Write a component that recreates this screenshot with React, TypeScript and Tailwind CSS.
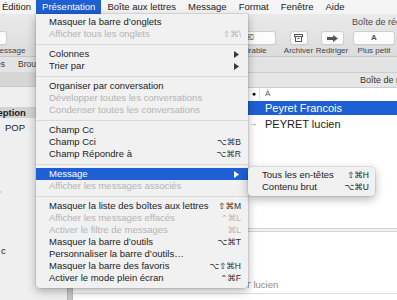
import React from "react";

type Row =
  | { sep: true }
  | {
      sep?: false;
      label: string;
      keys?: string;
      off?: boolean;
      sub?: boolean;
      active?: boolean;
    };

const rows: Row[] = [
  { label: "Masquer la barre d’onglets" },
  { label: "Afficher tous les onglets", keys: "⇧⌘\\", off: true },
  { sep: true },
  { label: "Colonnes", sub: true },
  { label: "Trier par", sub: true },
  { sep: true },
  { label: "Organiser par conversation" },
  { label: "Développer toutes les conversations", off: true },
  { label: "Condenser toutes les conversations", off: true },
  { sep: true },
  { label: "Champ Cc" },
  { label: "Champ Cci", keys: "⌥⌘B" },
  { label: "Champ Répondre à", keys: "⌥⌘R" },
  { sep: true },
  { label: "Message", sub: true, active: true },
  { label: "Afficher les messages associés", off: true },
  { sep: true },
  { label: "Masquer la liste des boîtes aux lettres", keys: "⇧⌘M" },
  { label: "Afficher les messages effacés", keys: "⌃⌘L", off: true },
  { label: "Activer le filtre de messages", keys: "⌘L", off: true },
  { label: "Masquer la barre d’outils", keys: "⌥⌘T" },
  { label: "Personnaliser la barre d’outils…" },
  { label: "Masquer la barre des favoris", keys: "⌥⇧⌘H" },
  { label: "Activer le mode plein écran", keys: "⌃⌘F" },
];

const Arrow = ({ white }: { white?: boolean }) => (
  <svg width="5" height="7" viewBox="0 0 5 7" className="mr-[2px]">
    <polygon points="0,0 5,3.5 0,7" fill={white ? "#ffffff" : "#3a3a3a"} />
  </svg>
);

const ToolButton = ({ w, children }: { w: number; children?: React.ReactNode }) => (
  <div
    className="h-[14px] rounded-[3px] bg-[#fcfcfc] border border-[#cfcfcf] shadow-[0_0.5px_0_rgba(0,0,0,0.08)] flex items-center justify-center shrink-0"
    style={{ width: w }}
  >
    {children}
  </div>
);

const App = () => {
  return (
    <div className="relative w-[397px] h-[300px] overflow-hidden bg-white font-['Liberation_Sans','DejaVu_Sans',sans-serif] text-[#1b1b1b]">
      {/* menu bar */}
      <div className="flex h-[14px] bg-[#f5f5f5] text-[9.5px] leading-[14px] whitespace-nowrap">
        <div className="-ml-[4px] pl-[6px] pr-[5px]">Édition</div>
        <div className="px-[6px] bg-[#1f5fd4] text-white">Présentation</div>
        <div className="px-[6px]">Boîte aux lettres</div>
        <div className="px-[6px]">Message</div>
        <div className="px-[6px]">Format</div>
        <div className="px-[6px]">Fenêtre</div>
        <div className="px-[6px]">Aide</div>
      </div>

      {/* window toolbar */}
      <div className="h-[43px] bg-gradient-to-b from-[#eaeaea] to-[#dcdcdc] border-b border-[#c6c6c6] text-[#444] overflow-hidden">
        <div className="h-[16px] pl-[352px] text-[9px] leading-[16px] text-[#4a4a4a] whitespace-nowrap">
          Boîte de réception
        </div>
        <div className="flex mt-[1px] text-[8px] leading-[10px] whitespace-nowrap">
          <div className="flex flex-col items-center w-[64px] -ml-[40px] shrink-0">
            <ToolButton w={30} />
            <div className="mt-[1px]">Nouveau message</div>
          </div>
          <div className="flex flex-col items-center w-[60px] ml-[7px] shrink-0">
            <ToolButton w={44} />
          </div>
          <div className="w-[127px] shrink-0" />
          <div className="flex flex-col items-center w-[58px] shrink-0">
            <ToolButton w={58}>
              <span className="ml-auto mr-[21px] text-[8px] text-[#666]">⌧</span>
            </ToolButton>
            <div className="mt-[1px]">Indésirable</div>
          </div>
          <div className="flex flex-col items-center w-[31px] ml-[7px] shrink-0">
            <ToolButton w={18}>
              <svg width="9" height="8" viewBox="0 0 9 8">
                <rect x="0.5" y="0.5" width="8" height="2" fill="none" stroke="#555" />
                <rect x="1.5" y="2.5" width="6" height="5" fill="none" stroke="#555" />
                <line x1="3.5" y1="4.5" x2="5.5" y2="4.5" stroke="#555" />
              </svg>
            </ToolButton>
            <div className="mt-[1px]">Archiver</div>
          </div>
          <div className="flex flex-col items-center w-[32px] ml-[2px] shrink-0">
            <ToolButton w={23}>
              <svg width="11" height="7" viewBox="0 0 11 7">
                <polygon points="0,2 6,2 6,0 11,3.5 6,7 6,5 0,5" fill="#555" />
              </svg>
            </ToolButton>
            <div className="mt-[1px]">Rediriger</div>
          </div>
          <div className="flex flex-col items-center w-[42px] ml-[5px] shrink-0">
            <ToolButton w={42}>
              <span className="text-[8px] font-bold text-[#555]">A</span>
            </ToolButton>
            <div className="mt-[1px]">Plus petit</div>
          </div>
          <div className="flex flex-col items-center w-[42px] ml-[2px] shrink-0">
            <ToolButton w={42} />
          </div>
        </div>
      </div>

      {/* favourites bar */}
      <div className="flex h-[15px] bg-[#e3e3e3] text-[8.5px] leading-[15px] text-[#3a3a3a] whitespace-nowrap overflow-hidden">
        <div className="-ml-[19px] shrink-0">Boîtes</div>
        <div className="ml-[13px] shrink-0">Brouillons</div>
      </div>

      {/* body */}
      <div className="flex h-[228px]">
        <div className="w-[67px] shrink-0 flex flex-col bg-[#efefef] text-[9.5px] whitespace-nowrap overflow-hidden">
          <div className="h-[15px] bg-[#d6d6d6] border-b border-[#c9c9c9]" />
          <div className="h-[20px]" />
          <div className="h-[11px] leading-[11px] bg-[#d3d3d3] font-bold">
            <span className="-ml-[57px] inline-block">Boîte de réception</span>
          </div>
          <div className="h-[12px] leading-[12px] mt-[4px] pl-[5px]">POP</div>
          <div className="h-[56px]" />
          <div className="h-[8px] leading-[8px] text-[#888] -ml-[1px]">'</div>
          <div className="h-[47px]" />
          <div className="h-[12px] leading-[12px] pl-[1px]">c</div>
        </div>
        <div className="w-[6px] shrink-0 bg-[#c8c8c8] border-x border-[#b9b9b9]" />
        <div className="flex-1 min-w-0 flex flex-col overflow-hidden">
          <div className="h-[16px] bg-[#e6e6e6] border-y border-[#cdcdcd] pl-[287px] text-[9px] leading-[14px] text-[#333] whitespace-nowrap">
            Boîte de réception
          </div>
          <div className="h-[12px] flex items-center text-[8px] text-[#555]">
            <div className="w-[186px] shrink-0 flex justify-end pr-[3px]">
              <span className="text-[7px] text-black">●</span>
            </div>
            <div className="pl-[5px] border-l border-[#e2e2e2]">À</div>
          </div>
          <div className="h-[14px] mt-[1px] flex items-center bg-[#1f5fd4] text-white text-[11px]">
            <div className="w-[192px] shrink-0" />
            <div>Peyret Francois</div>
          </div>
          <div className="h-[14px] mt-[2px] flex items-center text-[11px]">
            <div className="w-[186px] shrink-0 text-right text-[8px] text-[#777] pr-[2px]">→</div>
            <div className="pl-[6px]">PEYRET lucien</div>
          </div>
          <div className="h-[97px]" />
          <div className="h-[4px] border-y border-[#d3d3d3] bg-[#f3f3f3]" />
          <div className="h-[46px]" />
          <div className="h-[14px] leading-[14px] text-[9.5px] text-[#8a8a8a] pl-[140px] whitespace-nowrap">
            PEYRET lucien
          </div>
          <div className="mt-[1px] h-[1px] bg-[#dedede]" />
        </div>
      </div>

      {/* Présentation menu */}
      <div className="absolute left-[36px] top-[14px] w-[212px] pt-[2px] pb-[4px] bg-[#f1f1f1] rounded-b-[4px] shadow-[0_3px_10px_rgba(0,0,0,0.3),0_0_0_0.5px_rgba(0,0,0,0.15)] text-[9.5px] whitespace-nowrap">
        {rows.map((r, i) =>
          r.sep ? (
            <div key={i} className="h-[8px] flex items-center">
              <div className="w-full h-[1px] bg-[#dadada]" />
            </div>
          ) : (
            <div
              key={i}
              className={`h-[12px] leading-[12px] flex items-center pl-[13px] pr-[7px] ${
                r.active ? "bg-[#1f5fd4] text-white" : r.off ? "text-[#b3b3b3]" : "text-[#1b1b1b]"
              }`}
            >
              <span className="flex-1">{r.label}</span>
              {r.keys && (
                <span className={`text-[8.5px] ${r.off ? "text-[#b3b3b3]" : "text-[#2b2b2b]"}`}>{r.keys}</span>
              )}
              {r.sub && <Arrow white={r.active} />}
            </div>
          )
        )}
      </div>

      {/* Message submenu */}
      <div className="absolute left-[248px] top-[167px] w-[127px] pt-[2px] pb-[3px] bg-[#f1f1f1] rounded-[4px] shadow-[0_3px_10px_rgba(0,0,0,0.3),0_0_0_0.5px_rgba(0,0,0,0.15)] text-[9.5px] whitespace-nowrap">
        <div className="h-[12px] leading-[12px] flex items-center pl-[14px] pr-[6px]">
          <span className="flex-1">Tous les en-têtes</span>
          <span className="text-[8.5px]">⇧⌘H</span>
        </div>
        <div className="h-[12px] leading-[12px] flex items-center pl-[14px] pr-[6px]">
          <span className="flex-1">Contenu brut</span>
          <span className="text-[8.5px]">⌥⌘U</span>
        </div>
      </div>
    </div>
  );
};

export default App;
